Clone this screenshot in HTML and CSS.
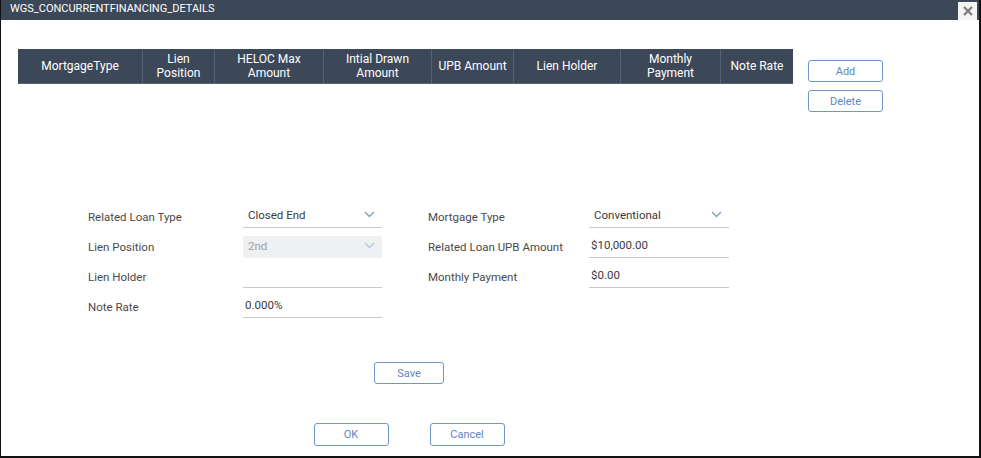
FILE: index.html
```html
<!DOCTYPE html>
<html>
<head>
<meta charset="utf-8">
<link rel="stylesheet" href="styles.css">
</head>
<body>
<div class="window">
  <div class="titlebar">
    <span class="title">WGS_CONCURRENTFINANCING_DETAILS</span>
    <button class="close" aria-label="Close">
      <svg width="10" height="10" viewBox="0 0 10 10"><path d="M1.8 1.8 L8.2 8.2 M8.2 1.8 L1.8 8.2" stroke="#7a7a7a" stroke-width="2.2" stroke-linecap="square"/></svg>
    </button>
  </div>
  <div class="content">
    <div class="top">
      <div class="grid-head">
        <div class="th">MortgageType</div>
        <div class="th">Lien<br>Position</div>
        <div class="th">HELOC Max<br>Amount</div>
        <div class="th">Intial Drawn<br>Amount</div>
        <div class="th">UPB Amount</div>
        <div class="th">Lien Holder</div>
        <div class="th">Monthly<br>Payment</div>
        <div class="th">Note Rate</div>
      </div>
      <div class="side-buttons">
        <button class="btn btn-side">Add</button>
        <button class="btn btn-side">Delete</button>
      </div>
    </div>
    <div class="form">
      <div class="fields">
        <div class="col">
          <div class="row"><span class="label">Related Loan Type</span><div class="field select"><span>Closed End</span><svg class="chev" width="11" height="7" viewBox="0 0 11 7"><path d="M1 1 L5.5 5.5 L10 1" fill="none" stroke="#7b9ccb" stroke-width="1.3"/></svg></div></div>
          <div class="row"><span class="label">Lien Position</span><div class="field select disabled"><span>2nd</span><svg class="chev" width="11" height="7" viewBox="0 0 11 7"><path d="M1 1 L5.5 5.5 L10 1" fill="none" stroke="#b7c6dc" stroke-width="1.3"/></svg></div></div>
          <div class="row"><span class="label">Lien Holder</span><div class="field input"><span></span></div></div>
          <div class="row"><span class="label">Note Rate</span><div class="field input"><span>0.000%</span></div></div>
        </div>
        <div class="col col-right">
          <div class="row"><span class="label">Mortgage Type</span><div class="field select"><span>Conventional</span><svg class="chev" width="11" height="7" viewBox="0 0 11 7"><path d="M1 1 L5.5 5.5 L10 1" fill="none" stroke="#7b9ccb" stroke-width="1.3"/></svg></div></div>
          <div class="row"><span class="label">Related Loan UPB Amount</span><div class="field input"><span>$10,000.00</span></div></div>
          <div class="row"><span class="label">Monthly Payment</span><div class="field input"><span>$0.00</span></div></div>
        </div>
      </div>
      <div class="save-row"><button class="btn btn-save">Save</button></div>
      <div class="footer-row">
        <button class="btn btn-foot">OK</button>
        <button class="btn btn-foot">Cancel</button>
      </div>
    </div>
  </div>
</div>
</body>
</html>
```

FILE: styles.css
```css
* { box-sizing: border-box; }
html, body { margin: 0; padding: 0; background: #fff; }
body { font-family: Roboto, "Noto Sans", Arial, sans-serif; }

.window {
  width: 981px;
  height: 458px;
  border-left: 1px solid #111;
  border-right: 2px solid #111;
  border-bottom: 2px solid #111;
  background: #fff;
  display: flex;
  flex-direction: column;
}

.titlebar {
  height: 20px;
  background: #3c4858;
  display: flex;
  align-items: center;
  justify-content: space-between;
  padding-left: 9px;
  padding-right: 2px;
}
.title {
  color: #fff;
  font-size: 11px;
  line-height: 12px;
  margin-top: -3px;
}
.close {
  width: 19px;
  height: 18px;
  margin-top: 1px;
  border: none;
  padding: 0;
  background: #f4f4f4;
  display: flex;
  align-items: center;
  justify-content: center;
}

.content {
  padding-left: 17px;
  padding-top: 29px;
  display: flex;
  flex-direction: column;
}

.top {
  display: flex;
  align-items: flex-start;
  gap: 15px;
}
.grid-head {
  display: grid;
  grid-template-columns: 124px 72px 109px 108px 82px 107px 100px 73px;
  height: 35px;
  background: #3c4858;
  border-bottom: 1px solid #56637a;
}
.th {
  color: #fff;
  font-size: 12px;
  line-height: 14px;
  display: flex;
  align-items: center;
  justify-content: center;
  text-align: center;
  border-left: 1px solid #55627a;
}
.th:first-child { border-left: none; }

.side-buttons {
  display: flex;
  flex-direction: column;
  gap: 8px;
  padding-top: 11px;
}

.btn {
  font-family: Roboto, "Noto Sans", Arial, sans-serif;
  font-size: 11px;
  color: #5d86be;
  background: #fff;
  border: 1px solid #6f95c9;
  border-radius: 3px;
  padding: 0;
}
.btn-side { width: 75px; height: 22px; }
.btn-save { width: 70px; height: 22px; }
.btn-foot { width: 75px; height: 23px; }

.form {
  margin-left: 70px;
  margin-top: 93px;
  width: 642px;
  display: flex;
  flex-direction: column;
}
.fields {
  display: flex;
  gap: 46px;
}
.col {
  display: flex;
  flex-direction: column;
  gap: 7px;
}
.row {
  display: flex;
  align-items: center;
  height: 23px;
}
.row .label {
  width: 155px;
  font-size: 11.5px;
  color: #4a4a4a;
  padding-top: 1px;
}
.col-right .label { width: 161px; }

.field {
  width: 139px;
  height: 23px;
  border-bottom: 1px solid #c8c8c8;
  display: flex;
  align-items: center;
  justify-content: space-between;
  font-size: 11.5px;
  color: #3a3a3a;
  padding-bottom: 3px;
}
.col-right .field { width: 140px; }
.select { padding-left: 5px; padding-right: 7px; }
.input { padding-left: 2px; }
.select.disabled {
  background: #eff0f2;
  border-bottom: none;
  border-radius: 2px;
  color: #a0a0a0;
  height: 22px;
  padding-bottom: 2px;
}
.chev { flex: none; }

.save-row {
  display: flex;
  justify-content: center;
  margin-top: 44px;
}
.footer-row {
  display: flex;
  justify-content: center;
  gap: 41px;
  margin-top: 39px;
}
```
